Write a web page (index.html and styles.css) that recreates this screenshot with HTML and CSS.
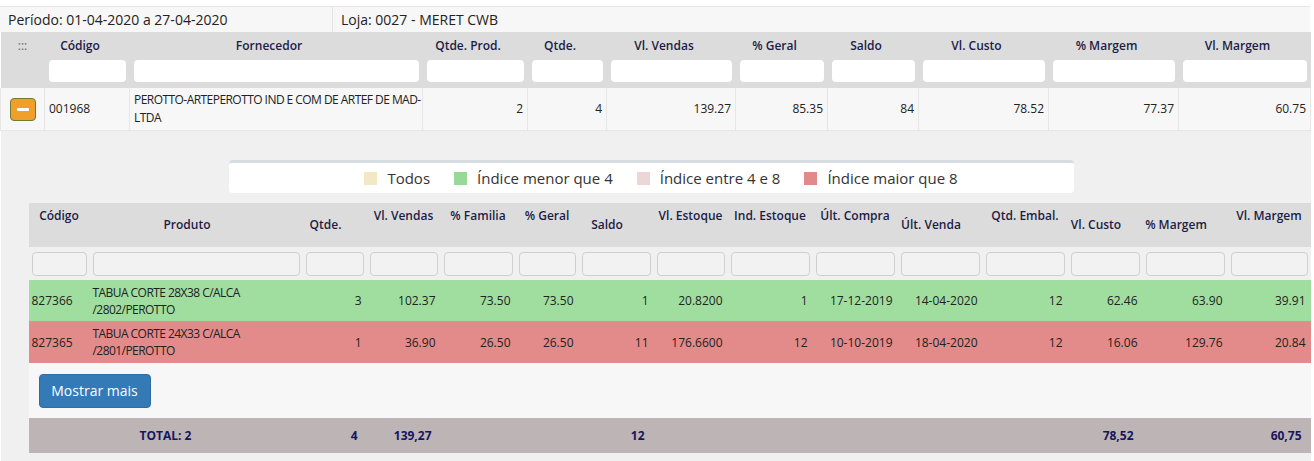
FILE: index.html
```html
<!DOCTYPE html>
<html lang="pt-BR">
<head>
  <meta charset="UTF-8">
  <meta name="viewport" content="width=device-width, initial-scale=1.0">
  <title>Fornecedores - Vendas</title>
  <link rel="stylesheet" href="styles.css">
</head>
<body>
  <div class="info">
    <div class="info-cell periodo">Período: 01-04-2020 a 27-04-2020</div>
    <div class="info-cell">Loja: 0027 - MERET CWB</div>
  </div>

  <table class="grid">
    <colgroup>
      <col style="width:44px"><col style="width:85px"><col style="width:293px"><col style="width:105px">
      <col style="width:79px"><col style="width:129px"><col style="width:92px"><col style="width:91px">
      <col style="width:130px"><col style="width:130px"><col style="width:132px">
    </colgroup>
    <thead>
      <tr class="head">
        <th class="dots">:::</th>
        <th>Código</th>
        <th>Fornecedor</th>
        <th>Qtde. Prod.</th>
        <th>Qtde.</th>
        <th>Vl. Vendas</th>
        <th>% Geral</th>
        <th>Saldo</th>
        <th>Vl. Custo</th>
        <th>% Margem</th>
        <th>Vl. Margem</th>
      </tr>
      <tr class="filters">
        <th></th>
        <th><input type="text"></th>
        <th><input type="text"></th>
        <th><input type="text"></th>
        <th><input type="text"></th>
        <th><input type="text"></th>
        <th><input type="text"></th>
        <th><input type="text"></th>
        <th><input type="text"></th>
        <th><input type="text"></th>
        <th><input type="text"></th>
      </tr>
    </thead>
    <tbody>
      <tr class="row">
        <td class="center"><button class="toggle"><span></span></button></td>
        <td>001968</td>
        <td class="txt">PEROTTO-ARTEPEROTTO IND E COM DE ARTEF DE MAD-<br>LTDA</td>
        <td class="num">2</td>
        <td class="num">4</td>
        <td class="num">139.27</td>
        <td class="num">85.35</td>
        <td class="num">84</td>
        <td class="num">78.52</td>
        <td class="num">77.37</td>
        <td class="num">60.75</td>
      </tr>
      <tr class="detail">
        <td colspan="11">
          <div class="legend">
            <span class="item"><i class="sq todos"></i>Todos</span>
            <span class="item"><i class="sq menor"></i>Índice menor que 4</span>
            <span class="item"><i class="sq entre"></i>Índice entre 4 e 8</span>
            <span class="item"><i class="sq maior"></i>Índice maior que 8</span>
          </div>

          <table class="sub">
            <colgroup>
              <col style="width:61px"><col style="width:213px"><col style="width:64px"><col style="width:74px">
              <col style="width:75px"><col style="width:63px"><col style="width:75px"><col style="width:74px">
              <col style="width:85px"><col style="width:85px"><col style="width:85px"><col style="width:85px">
              <col style="width:75px"><col style="width:85px"><col style="width:83px">
            </colgroup>
            <thead>
              <tr class="head">
                <th class="top">Código</th>
                <th class="low">Produto</th>
                <th class="low">Qtde.</th>
                <th class="top">Vl. Vendas</th>
                <th class="top">% Familia</th>
                <th class="top">% Geral</th>
                <th class="low">Saldo</th>
                <th class="top">Vl. Estoque</th>
                <th class="top">Ind. Estoque</th>
                <th class="top">Últ. Compra</th>
                <th class="low">Últ. Venda</th>
                <th class="top">Qtd. Embal.</th>
                <th class="low">Vl. Custo</th>
                <th class="low">% Margem</th>
                <th class="top">Vl. Margem</th>
              </tr>
              <tr class="filters">
                <th><input type="text"></th><th><input type="text"></th><th><input type="text"></th>
                <th><input type="text"></th><th><input type="text"></th><th><input type="text"></th>
                <th><input type="text"></th><th><input type="text"></th><th><input type="text"></th>
                <th><input type="text"></th><th><input type="text"></th><th><input type="text"></th>
                <th><input type="text"></th><th><input type="text"></th><th><input type="text"></th>
              </tr>
            </thead>
            <tbody>
              <tr class="ok">
                <td>827366</td>
                <td class="txt">TABUA CORTE 28X38 C/ALCA<br>/2802/PEROTTO</td>
                <td class="num">3</td>
                <td class="num">102.37</td>
                <td class="num">73.50</td>
                <td class="num">73.50</td>
                <td class="num">1</td>
                <td class="num">20.8200</td>
                <td class="num">1</td>
                <td class="num">17-12-2019</td>
                <td class="num">14-04-2020</td>
                <td class="num">12</td>
                <td class="num">62.46</td>
                <td class="num">63.90</td>
                <td class="num">39.91</td>
              </tr>
              <tr class="alto">
                <td>827365</td>
                <td class="txt">TABUA CORTE 24X33 C/ALCA<br>/2801/PEROTTO</td>
                <td class="num">1</td>
                <td class="num">36.90</td>
                <td class="num">26.50</td>
                <td class="num">26.50</td>
                <td class="num">11</td>
                <td class="num">176.6600</td>
                <td class="num">12</td>
                <td class="num">10-10-2019</td>
                <td class="num">18-04-2020</td>
                <td class="num">12</td>
                <td class="num">16.06</td>
                <td class="num">129.76</td>
                <td class="num">20.84</td>
              </tr>
              <tr class="more">
                <td colspan="15"><button class="btn-more">Mostrar mais</button></td>
              </tr>
            </tbody>
            <tfoot>
              <tr class="total">
                <td colspan="2" class="center">TOTAL: 2</td>
                <td class="num">4</td>
                <td class="num">139,27</td>
                <td></td>
                <td></td>
                <td class="num">12</td>
                <td></td>
                <td></td>
                <td></td>
                <td></td>
                <td></td>
                <td class="num">78,52</td>
                <td></td>
                <td class="num">60,75</td>
              </tr>
            </tfoot>
          </table>
        </td>
      </tr>
    </tbody>
  </table>
</body>
</html>
```

FILE: styles.css
```css
body {
  margin: 0;
  padding-top: 6px;
  background: #fff;
  font-family: "Open Sans", "Liberation Sans", sans-serif;
  color: #222;
}
.info {
  display: flex;
  width: 1310px;
  height: 26px;
  background: #f7f7f7;
  border-top: 1px solid #e6e6e6;
  box-sizing: border-box;
  font-size: 14px;
  line-height: 25px;
}
.info-cell {
  padding: 0 8px;
}
.info-cell.periodo {
  width: 333px;
  box-sizing: border-box;
  border-right: 1px solid #e2e2e2;
}
.grid {
  width: 1310px;
  table-layout: fixed;
  border-collapse: collapse;
  font-size: 12px;
}
.grid th, .grid td {
  padding: 0;
}
.txt {
  letter-spacing: -0.55px;
  white-space: nowrap;
}
.head th {
  background: #dcdcdc;
  color: #1c1c48;
  font-weight: 600;
  text-align: center;
}
.grid > thead > .head th {
  height: 26px;
  padding-right: 14px;
}
.grid > thead > .head th.dots {
  padding-right: 0;
  font-weight: 400;
  color: #666;
}
.grid > thead > .filters th {
  background: #dcdcdc;
  height: 26px;
  padding: 0 4px 4px;
  vertical-align: middle;
}
.grid > thead > .filters input {
  display: block;
  width: 100%;
  height: 22px;
  box-sizing: border-box;
  border: none;
  border-radius: 4px;
  background: #fff;
}
.row td {
  height: 42px;
  background: #f7f7f7;
  border: 1px solid #e6e6e6;
  border-top: none;
  padding: 0 4px;
  line-height: 18px;
}
.row td.num {
  text-align: right;
}
.center {
  text-align: center;
}
.toggle {
  width: 26px;
  height: 23px;
  padding: 0;
  border: 1px solid #6c7d32;
  border-radius: 4px;
  background: #f0a02a;
  display: flex;
  align-items: center;
  justify-content: center;
  margin: 0 auto;
}
.toggle span {
  width: 12px;
  height: 3px;
  border-radius: 1px;
  background: #fff;
}
.detail > td {
  background: #f0f0f0;
  padding: 29px 0 8px 28px !important;
}
.legend {
  width: 845px;
  height: 33px;
  margin-left: 200px;
  box-sizing: border-box;
  background: #fff;
  border-top: 3px solid #d7dbe2;
  border-radius: 4px;
  display: flex;
  justify-content: center;
  align-items: center;
  gap: 24px;
  font-size: 15px;
  color: #333;
  padding-left: 20px;
}
.legend .item {
  display: flex;
  align-items: center;
}
.sq {
  width: 13px;
  height: 13px;
  margin-right: 10px;
}
.sq.todos { background: #f2e8c6; }
.sq.menor { background: #98d898; }
.sq.entre { background: #ecd6d6; }
.sq.maior { background: #e08a8a; }
.sub {
  width: 1282px;
  margin-top: 10px;
  table-layout: fixed;
  border-collapse: collapse;
  font-size: 12px;
}
.sub th, .sub td {
  padding: 0;
}
.sub .head th {
  line-height: 16px;
}
.sub .head th.top {
  vertical-align: top;
  height: 39px;
  padding-top: 5px;
}
.sub .head th.low {
  vertical-align: middle;
  height: 44px;
  padding-right: 18px;
}
.sub .filters th {
  background: #f0f0f0;
  height: 33px;
  padding: 0 3px;
}
.sub .filters input {
  display: block;
  width: 100%;
  height: 24px;
  box-sizing: border-box;
  border: 1px solid #cfcfcf;
  border-radius: 4px;
  background: #f2f2f2;
}
.sub tbody td {
  padding: 0 3px;
  line-height: 17px;
}
.sub td.num {
  text-align: right;
  padding-right: 5px;
}
.ok td {
  height: 41px;
  background: #a0dea0;
}
.alto td {
  height: 42px;
  background: #e38b8a;
}
.more td {
  height: 55px;
  background: #f7f7f7;
  padding-left: 10px !important;
}
.btn-more {
  height: 34px;
  width: 112px;
  padding: 0;
  font-family: inherit;
  font-size: 14px;
  color: #fff;
  background: #337ab7;
  border: 1px solid #2e6da4;
  border-radius: 4px;
  cursor: pointer;
}
.total td {
  height: 35px;
  background: #bdb5b5;
  color: #161660;
  font-weight: 700;
}
.total td.num {
  text-align: right;
  padding-right: 9px;
}
```
